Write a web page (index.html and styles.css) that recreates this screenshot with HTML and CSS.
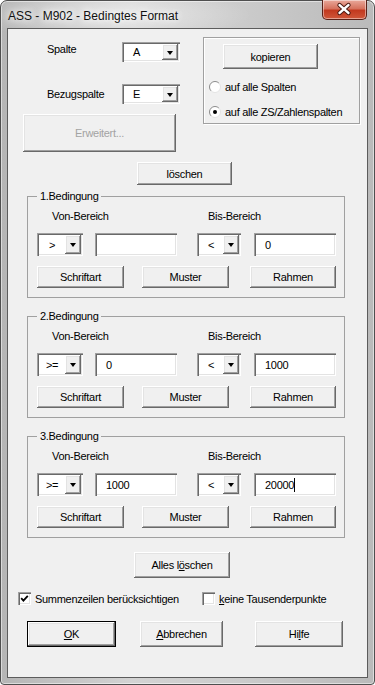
FILE: index.html
```html
<!DOCTYPE html>
<html lang="de">
<head>
    <meta charset="UTF-8">
    <meta name="viewport" content="width=device-width, initial-scale=1.0">
    <title>ASS - M902 - Bedingtes Format</title>
    <link rel="stylesheet" href="styles.css">
</head>
<body>
    <div class="window">
        <div class="titlebar">
            <span class="title">ASS - M902 - Bedingtes Format</span>
            <button class="close-btn" title="Schließen">
                <svg width="45" height="20" viewBox="0 0 45 20">
                    <path d="M18 6 L27 14 M27 6 L18 14" stroke="#4a1a12" stroke-width="4.6" stroke-linecap="round"/>
                    <path d="M18 6 L27 14 M27 6 L18 14" stroke="#fff" stroke-width="2.6" stroke-linecap="round"/>
                </svg>
            </button>
        </div>

        <div class="client">
            <div class="top">
                <div class="top-left">
                    <div class="field-row">
                        <span class="field-label raised">Spalte</span>
                        <div class="combo combo-col"><span class="combo-value">A</span><span class="drop"></span></div>
                    </div>
                    <div class="field-row">
                        <span class="field-label">Bezugspalte</span>
                        <div class="combo combo-col"><span class="combo-value">E</span><span class="drop"></span></div>
                    </div>
                    <button class="btn btn-more" disabled>Erweitert...</button>
                </div>

                <div class="copy-box">
                    <button class="btn btn-copy">kopieren</button>
                    <label class="radio-row first">
                        <svg class="radio" width="12" height="12" viewBox="0 0 12 12">
                            <circle cx="6" cy="6" r="5.5" fill="#fff"/>
                            <path d="M2.1 9.9 A5.5 5.5 0 0 1 9.9 2.1" stroke="#8c8c8c" fill="none"/>
                            <path d="M9.9 2.1 A5.5 5.5 0 0 1 2.1 9.9" stroke="#e3e3e3" fill="none"/>
                        </svg>
                        <span>auf alle Spalten</span>
                    </label>
                    <label class="radio-row">
                        <svg class="radio" width="12" height="12" viewBox="0 0 12 12">
                            <circle cx="6" cy="6" r="5.5" fill="#fff"/>
                            <path d="M2.1 9.9 A5.5 5.5 0 0 1 9.9 2.1" stroke="#8c8c8c" fill="none"/>
                            <path d="M9.9 2.1 A5.5 5.5 0 0 1 2.1 9.9" stroke="#e3e3e3" fill="none"/>
                            <circle cx="6" cy="6" r="2" fill="#000"/>
                        </svg>
                        <span>auf alle ZS/Zahlenspalten</span>
                    </label>
                </div>
            </div>

            <div class="row-delete">
                <button class="btn btn-delete">löschen</button>
            </div>

            <fieldset class="cond">
                <legend>1.Bedingung</legend>
                <div class="cond-labels"><span class="lbl-von">Von-Bereich</span><span>Bis-Bereich</span></div>
                <div class="cond-inputs">
                    <div class="combo combo-op"><span class="combo-value">&gt;</span><span class="drop"></span></div>
                    <div class="textbox tb-von"></div>
                    <div class="combo combo-op combo-bis"><span class="combo-value">&lt;</span><span class="drop"></span></div>
                    <div class="textbox tb-bis">0</div>
                </div>
                <div class="cond-buttons">
                    <button class="btn btn-font">Schriftart</button>
                    <button class="btn btn-pattern">Muster</button>
                    <button class="btn btn-frame">Rahmen</button>
                </div>
            </fieldset>

            <fieldset class="cond">
                <legend>2.Bedingung</legend>
                <div class="cond-labels"><span class="lbl-von">Von-Bereich</span><span>Bis-Bereich</span></div>
                <div class="cond-inputs">
                    <div class="combo combo-op"><span class="combo-value">&gt;=</span><span class="drop"></span></div>
                    <div class="textbox tb-von">0</div>
                    <div class="combo combo-op combo-bis"><span class="combo-value">&lt;</span><span class="drop"></span></div>
                    <div class="textbox tb-bis">1000</div>
                </div>
                <div class="cond-buttons">
                    <button class="btn btn-font">Schriftart</button>
                    <button class="btn btn-pattern">Muster</button>
                    <button class="btn btn-frame">Rahmen</button>
                </div>
            </fieldset>

            <fieldset class="cond">
                <legend>3.Bedingung</legend>
                <div class="cond-labels"><span class="lbl-von">Von-Bereich</span><span>Bis-Bereich</span></div>
                <div class="cond-inputs">
                    <div class="combo combo-op"><span class="combo-value">&gt;=</span><span class="drop"></span></div>
                    <div class="textbox tb-von">1000</div>
                    <div class="combo combo-op combo-bis"><span class="combo-value">&lt;</span><span class="drop"></span></div>
                    <div class="textbox tb-bis">20000<span class="caret"></span></div>
                </div>
                <div class="cond-buttons">
                    <button class="btn btn-font">Schriftart</button>
                    <button class="btn btn-pattern">Muster</button>
                    <button class="btn btn-frame">Rahmen</button>
                </div>
            </fieldset>

            <div class="row-clear">
                <button class="btn btn-clear">Alles l<u>ö</u>schen</button>
            </div>

            <div class="checks">
                <label class="check check-sum">
                    <span class="checkbox">
                        <svg width="13" height="13" viewBox="0 0 13 13"><path d="M3.2 6.2 L5.4 8.6 L9.8 3.8" stroke="#000" stroke-width="1.8" fill="none"/></svg>
                    </span>
                    <span>Summenzeilen berücksichtigen</span>
                </label>
                <label class="check">
                    <span class="checkbox"></span>
                    <span><u>k</u>eine Tausenderpunkte</span>
                </label>
            </div>

            <div class="actions">
                <button class="btn btn-ok"><u>O</u>K</button>
                <button class="btn btn-cancel"><u>A</u>bbrechen</button>
                <button class="btn btn-help">Hi<u>l</u>fe</button>
            </div>
        </div>
    </div>
</body>
</html>
```

FILE: styles.css
```css
* {
    box-sizing: border-box;
}
body {
    margin: 0;
    font-family: 'Liberation Sans', Arial, sans-serif;
    font-size: 11px;
    letter-spacing: -0.3px;
    color: #000;
    background: #fff;
}

/* Fensterrahmen */
.window {
    width: 375px;
    height: 685px;
    padding: 0 6px 6px;
    border: 1px solid #4f4f4f;
    border-radius: 7px 7px 4px 4px;
    background:
        radial-gradient(ellipse 140px 26px at 110px 14px, rgba(255,255,255,0.55), rgba(255,255,255,0)),
        linear-gradient(to right, #b5b5b5, #d3d3d3 35%, #cbcbcb 65%, #bababa);
    box-shadow: inset 0 0 0 1px rgba(255,255,255,0.5);
    display: flex;
    flex-direction: column;
}
.titlebar {
    height: 27px;
    display: flex;
    align-items: flex-start;
    justify-content: space-between;
}
.title {
    padding: 8px 0 0 1px;
    font-size: 12px;
    line-height: 15px;
    letter-spacing: 0;
    color: #111;
    text-shadow: 0 0 6px #fff, 0 0 10px #fff;
}
.close-btn {
    width: 45px;
    height: 20px;
    margin: -1px 1px 0 0;
    padding: 0;
    border: 1px solid #5a2219;
    border-top: none;
    border-radius: 0 0 5px 5px;
    background: linear-gradient(to bottom, #e9a99b, #d6725e 45%, #c2391f 55%, #d0573a);
    box-shadow: inset 0 0 0 1px rgba(255,255,255,0.45);
    display: flex;
}
.close-btn svg {
    margin: -1px 0 0 -1px;
}
.client {
    flex: 1;
    background: #f0f0f0;
    border: 1px solid #5c5c5c;
}

/* klassische 3D-Steuerelemente */
.btn {
    padding: 0;
    border: none;
    font-family: inherit;
    font-size: 11px;
    letter-spacing: inherit;
    color: #000;
    background: #f0f0f0;
    box-shadow: inset -1px -1px #696969, inset 1px 1px #fff, inset -2px -2px #a0a0a0, inset 2px 2px #e3e3e3;
}
.btn:disabled {
    color: #a3a3a3;
}
.combo, .textbox {
    background: #fff;
    box-shadow: inset 1px 1px #a0a0a0, inset 2px 2px #696969, inset -1px -1px #fff, inset -2px -2px #e3e3e3;
}
.combo {
    display: flex;
    align-items: stretch;
    padding: 2px;
}
.combo-value {
    flex: 1;
    display: flex;
    align-items: center;
}
.drop {
    width: 16px;
    background: #f0f0f0;
    box-shadow: inset -1px -1px #696969, inset 1px 1px #fff, inset -2px -2px #a0a0a0, inset 2px 2px #e3e3e3;
    display: flex;
    align-items: center;
    justify-content: center;
}
.drop::after {
    content: "";
    border-left: 3.5px solid transparent;
    border-right: 3.5px solid transparent;
    border-top: 4px solid #000;
    margin-top: 1px;
}
.textbox {
    display: flex;
    align-items: center;
    padding-left: 11px;
}
.caret {
    width: 1px;
    height: 14px;
    background: #000;
}

/* oberer Bereich */
.top {
    display: flex;
    padding: 8px 0 0 15px;
}
.top-left {
    width: 157px;
    margin: 5px 23px 0 0;
}
.field-row {
    display: flex;
    align-items: center;
    height: 20px;
}
.field-row + .field-row {
    margin-top: 22px;
}
.field-label {
    width: 99px;
    padding-left: 24px;
}
.field-label.raised {
    margin-top: -6px;
}
.combo-col {
    width: 58px;
    height: 20px;
}
.combo-col .combo-value {
    padding-left: 9px;
}
.btn-more {
    display: block;
    width: 153px;
    height: 38px;
    margin-top: 10px;
}
.copy-box {
    width: 157px;
    height: 87px;
    padding: 6px 0 0 19px;
    border: 1px solid #a0a0a0;
    box-shadow: inset 1px 1px #fff, 1px 1px #fff;
}
.btn-copy {
    display: block;
    width: 95px;
    height: 25px;
}
.radio-row {
    display: flex;
    align-items: center;
    gap: 4px;
    height: 13px;
    margin: 12px 0 0 -14px;
}
.radio-row.first {
    margin-top: 11px;
}
.row-delete {
    padding-left: 129px;
    margin-top: 10px;
}
.btn-delete {
    width: 95px;
    height: 23px;
}

/* Bedingungen */
.cond {
    width: 318px;
    margin: 5px 0 0 19px;
    padding: 7px 8px 9px 9px;
    border: 1px solid #a0a0a0;
}
.cond + .cond {
    margin-top: 12px;
}
.cond legend {
    padding: 0 3px;
    line-height: 13px;
}
.cond-labels {
    display: flex;
    height: 13px;
    line-height: 13px;
}
.lbl-von {
    width: 171px;
    padding-left: 15px;
}
.cond-inputs {
    display: flex;
    height: 23px;
    margin-top: 10px;
}
.combo-op {
    width: 46px;
}
.combo-op .combo-value {
    justify-content: center;
}
.combo-bis {
    width: 44px;
    margin-left: 20px;
}
.tb-von {
    width: 82px;
    margin-left: 12px;
}
.tb-bis {
    width: 82px;
    margin-left: 13px;
}
.cond-buttons {
    display: flex;
    height: 22px;
    margin-top: 10px;
}
.btn-font, .btn-pattern {
    width: 87px;
}
.btn-pattern {
    margin-left: 18px;
}
.btn-frame {
    width: 86px;
    margin-left: 21px;
}

/* unterer Bereich */
.row-clear {
    padding-left: 126px;
    margin-top: 14px;
}
.btn-clear {
    width: 96px;
    height: 26px;
}
.checks {
    display: flex;
    align-items: center;
    height: 13px;
    margin-top: 14px;
    padding-left: 10px;
}
.check {
    display: flex;
    align-items: center;
    gap: 4px;
}
.check-sum {
    width: 184px;
}
.checkbox {
    width: 13px;
    height: 13px;
    background: #fff;
    box-shadow: inset 1px 1px #a0a0a0, inset 2px 2px #696969, inset -1px -1px #fff, inset -2px -2px #e3e3e3;
    display: flex;
}
.actions {
    display: flex;
    margin-top: 16px;
    padding-left: 19px;
}
.actions .btn {
    height: 26px;
}
.btn-ok {
    width: 89px;
    border: 1px solid #000;
}
.btn-cancel {
    width: 83px;
    margin-left: 24px;
}
.btn-help {
    width: 88px;
    margin-left: 32px;
}
```
